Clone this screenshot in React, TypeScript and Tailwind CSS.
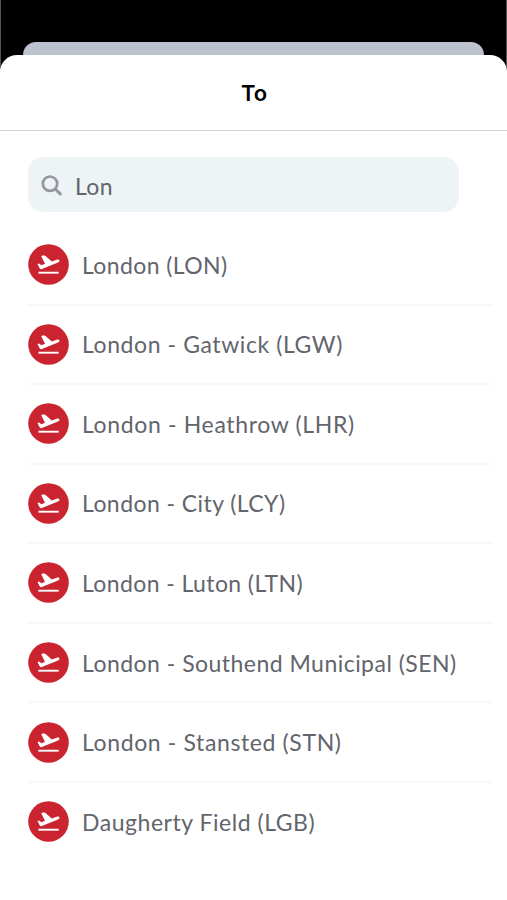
const airports = [
  { name: "London (LON)", tracking: "tracking-[0.4px]" },
  { name: "London - Gatwick (LGW)", tracking: "tracking-[0.58px]" },
  { name: "London - Heathrow (LHR)", tracking: "tracking-[0.65px]" },
  { name: "London - City (LCY)", tracking: "tracking-[0.43px]" },
  { name: "London - Luton (LTN)", tracking: "tracking-[0.4px]" },
  { name: "London - Southend Municipal (SEN)", tracking: "tracking-[0.47px]" },
  { name: "London - Stansted (STN)", tracking: "tracking-[0.62px]" },
  { name: "Daugherty Field (LGB)", tracking: "tracking-[0.53px]" },
];

function SearchField() {
  return (
    <div className="ml-7 mt-[26px] flex h-[55px] w-[431px] items-center rounded-[15px] bg-[#eef3f6] pl-[13px]">
      <svg viewBox="0 0 22 22" className="h-[22px] w-[22px] shrink-0" fill="none" stroke="#9497a0" strokeLinecap="round">
        <circle cx="9" cy="9.7" r="7.2" strokeWidth="2.7" />
        <path d="M14.5 15.2 19.2 19.9" strokeWidth="3" />
      </svg>
      <span className="ml-3 mt-[2px] text-[23px] leading-7 tracking-[0.4px] text-[#62656c]">Lon</span>
    </div>
  );
}

function TakeoffIcon() {
  return (
    <svg viewBox="0 0 41 41" className="size-[41px] shrink-0">
      <circle cx="20.5" cy="20.5" r="20.3" fill="#ca2430" />
      <path
        d="M13.2 12.2 15.3 11.3 17.5 12 23.8 17.6 28.7 15.7C30 15.2 31.2 15.6 31.4 16.6 31.6 17.5 31 18.1 30 18.5L13.2 25.2C12.4 25.2 11.9 24.8 11.5 24L9.5 20.1 11 19.4 13.5 21.2 17 19.7Z"
        fill="white"
      />
      <path d="M10.4 28.7H30.7" stroke="white" strokeWidth="1.9" />
    </svg>
  );
}

export default function App() {
  return (
    <div className="relative flex h-[900px] w-[507px] flex-col overflow-hidden bg-black font-['Lato','Open_Sans',sans-serif]">
      <div className="absolute inset-x-0 top-0 h-[76px] border-x border-[#555555]" />
      <div className="h-[55px] shrink-0 px-[23px] pt-[42px]">
        <div className="h-[13px] rounded-t-[13px] bg-[#bcc2ce]" />
      </div>
      <div className="relative flex-1 rounded-t-[17px] bg-white">
        <header className="flex h-[76px] items-center justify-center border-b border-[#d4d4d6] pl-[1px] pt-[2px] font-['Inter',sans-serif] text-[22px] font-semibold text-black">
          To
        </header>
        <SearchField />
        <ul className="ml-7 mr-[15px] mt-[14px]">
          {airports.map((airport) => (
            <li key={airport.name} className="flex h-[79.55px] items-center border-b-2 border-[#f6f8f9] last:border-transparent">
              <TakeoffIcon />
              <span className={`ml-[13px] whitespace-nowrap text-[23px] leading-7 text-[#62656c] ${airport.tracking}`}>
                {airport.name}
              </span>
            </li>
          ))}
        </ul>
      </div>
    </div>
  );
}
